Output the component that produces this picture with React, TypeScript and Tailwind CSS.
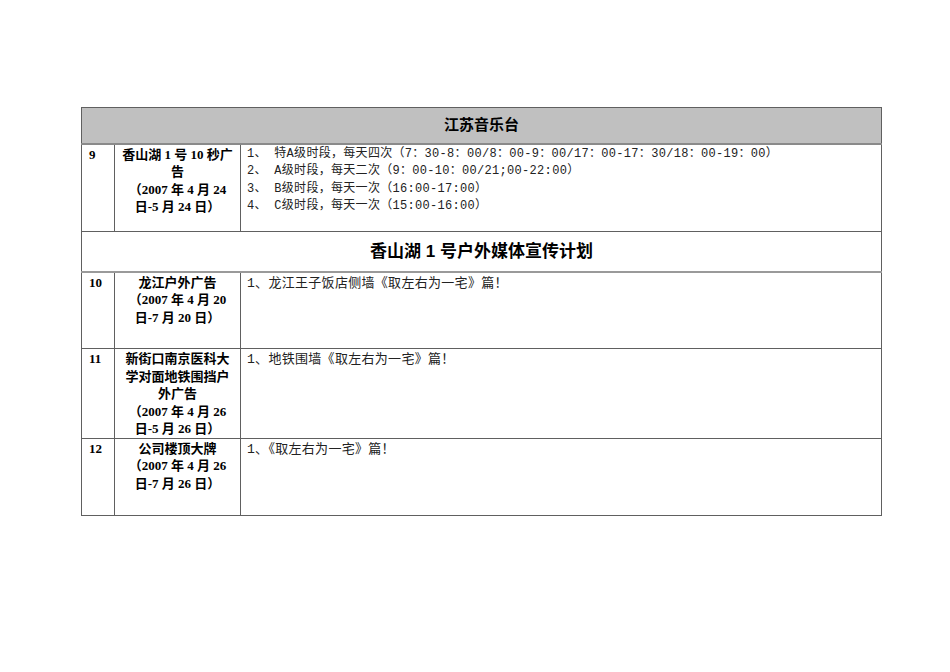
import React from "react";

type Row = {
  no: string;
  title: string[];
  items: string[];
  height: string;
  itemSize: string;
};

const cjkSerif = "font-['Liberation_Serif','Noto_Sans_CJK_SC',serif]";
const cjkSans = "font-['Liberation_Sans','Noto_Sans_CJK_SC',sans-serif]";
const cjkMono = "font-['Liberation_Mono','Noto_Sans_CJK_SC',monospace]";

const radioRow: Row = {
  no: "9",
  title: ["香山湖 1 号 10 秒广", "告", "（2007 年 4 月 24", "日-5 月 24 日）"],
  items: [
    "1、 特A级时段，每天四次（7：30-8：00/8：00-9：00/17：00-17：30/18：00-19：00）",
    "2、 A级时段，每天二次（9：00-10：00/21;00-22:00）",
    "3、 B级时段，每天一次（16:00-17:00）",
    "4、 C级时段，每天一次（15:00-16:00）",
  ],
  height: "h-[88px]",
  itemSize: "text-[12px] pt-[1px]",
};

const outdoorRows: Row[] = [
  {
    no: "10",
    title: ["龙江户外广告", "（2007 年 4 月 20", "日-7 月 20 日）"],
    items: ["1、龙江王子饭店侧墙《取左右为一宅》篇！"],
    height: "h-[77px]",
    itemSize: "text-[13px] pt-[2px]",
  },
  {
    no: "11",
    title: ["新街口南京医科大", "学对面地铁围挡户", "外广告", "（2007 年 4 月 26", "日-5 月 26 日）"],
    items: ["1、地铁围墙《取左右为一宅》篇！"],
    height: "h-[89px]",
    itemSize: "text-[13px] pt-[2px]",
  },
  {
    no: "12",
    title: ["公司楼顶大牌", "（2007 年 4 月 26", "日-7 月 26 日）"],
    items: ["1、《取左右为一宅》篇！"],
    height: "h-[77px]",
    itemSize: "text-[13px] pt-[2px]",
  },
];

const cell = "border border-[#606060] align-top";

const DataRow = ({ row }: { row: Row }) => (
  <tr className={row.height}>
    <td className={`${cell} pl-[7px] pt-[1px] text-[13px] leading-[17.5px] font-bold ${cjkSerif}`}>{row.no}</td>
    <td className={`${cell} px-[6px] pt-[1px] text-center text-[13px] leading-[17.5px] font-bold ${cjkSerif}`}>
      {row.title.map((line) => (
        <div key={line} className="whitespace-nowrap">
          {line}
        </div>
      ))}
    </td>
    <td className={`${cell} pl-[6px] leading-[17.5px] tracking-[0.3px] text-[#222] ${row.itemSize} ${cjkMono}`}>
      {row.items.map((line) => (
        <div key={line} className="whitespace-pre">
          {line}
        </div>
      ))}
    </td>
  </tr>
);

export default function App() {
  return (
    <div className="min-h-screen w-full bg-white pl-[81px] pt-[107px] text-black">
      <table className="w-[801px] table-fixed border-collapse">
        <colgroup>
          <col className="w-[33px]" />
          <col className="w-[126px]" />
          <col />
        </colgroup>
        <tbody>
          <tr className="h-[36px]">
            <td
              colSpan={3}
              className={`border border-[#606060] border-b-2 border-b-[#8a8a8a] bg-[#c0c0c0] text-center align-middle text-[15px] font-bold ${cjkSans}`}
            >
              江苏音乐台
            </td>
          </tr>
          <DataRow row={radioRow} />
          <tr className="h-[40px]">
            <td
              colSpan={3}
              className={`border border-[#606060] border-b-2 border-b-[#9a9a9a] text-center align-middle text-[17px] font-bold ${cjkSans}`}
            >
              香山湖 1 号户外媒体宣传计划
            </td>
          </tr>
          {outdoorRows.map((row) => (
            <DataRow key={row.no} row={row} />
          ))}
        </tbody>
      </table>
    </div>
  );
}
